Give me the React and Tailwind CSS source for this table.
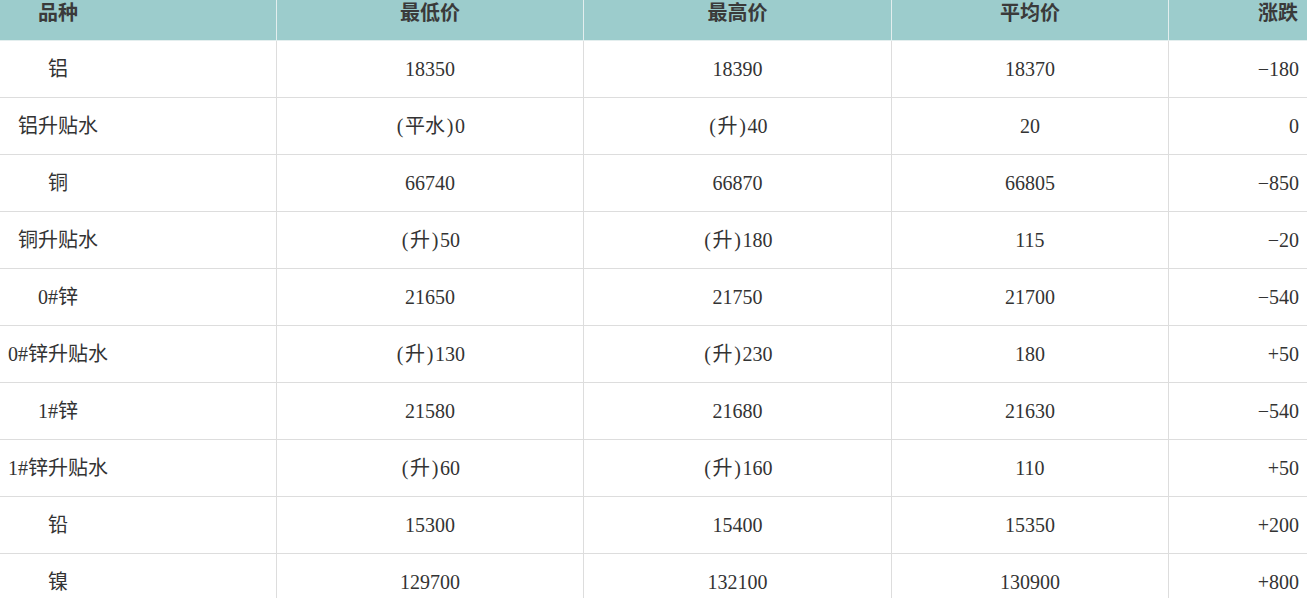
const rows = [
  ['铝', '18350', '18390', '18370', '−180'],
  ['铝升贴水', '(平水)0', '(升)40', '20', '0'],
  ['铜', '66740', '66870', '66805', '−850'],
  ['铜升贴水', '(升)50', '(升)180', '115', '−20'],
  ['0#锌', '21650', '21750', '21700', '−540'],
  ['0#锌升贴水', '(升)130', '(升)230', '180', '+50'],
  ['1#锌', '21580', '21680', '21630', '−540'],
  ['1#锌升贴水', '(升)60', '(升)160', '110', '+50'],
  ['铅', '15300', '15400', '15350', '+200'],
  ['镍', '129700', '132100', '130900', '+800'],
];

const cols = 'grid grid-cols-[277px_307px_308px_277px_1fr]';

// parens in the source font are half an em wide
const Price = ({ value }) => {
  const m = value.match(/^\((.+)\)(.*)$/);
  if (!m) return value;
  return (
    <span className="whitespace-nowrap">
      <span className="inline-block w-[10px] text-center">(</span>
      {m[1]}
      <span className="inline-block w-[10px] text-center">)</span>
      {m[2]}
    </span>
  );
};

const App = () => {
  return (
    <div
      className="w-[1307px] h-[598px] overflow-hidden bg-white text-[20px] text-[#333]"
      style={{ fontFamily: '"Liberation Serif", "Noto Sans CJK SC", serif' }}
    >
      <div className={`${cols} -mt-[14px] h-[55px] bg-[#9ccccc] border-b border-[#e3eeee] font-bold text-[#3a3a3a]`}>
        <div className="flex items-center border-r border-[#e3eeee]">
          <span className="w-[116px] text-center">品种</span>
        </div>
        <div className="flex items-center justify-center border-r border-[#e3eeee]">最低价</div>
        <div className="flex items-center justify-center border-r border-[#e3eeee]">最高价</div>
        <div className="flex items-center justify-center border-r border-[#e3eeee]">平均价</div>
        <div className="flex items-center justify-end pr-[9px]">涨跌</div>
      </div>
      {rows.map((r, i) => (
        <div key={i} className={`${cols} h-[57px] border-b border-[#dddddd]`}>
          <div className="flex items-center border-r border-[#dddddd]">
            <span className="w-[116px] text-center whitespace-nowrap">{r[0]}</span>
          </div>
          <div className="flex items-center justify-center border-r border-[#dddddd]"><Price value={r[1]} /></div>
          <div className="flex items-center justify-center border-r border-[#dddddd]"><Price value={r[2]} /></div>
          <div className="flex items-center justify-center border-r border-[#dddddd]">{r[3]}</div>
          <div className="flex items-center justify-end pr-[8px]">{r[4]}</div>
        </div>
      ))}
    </div>
  );
};

export default App;
